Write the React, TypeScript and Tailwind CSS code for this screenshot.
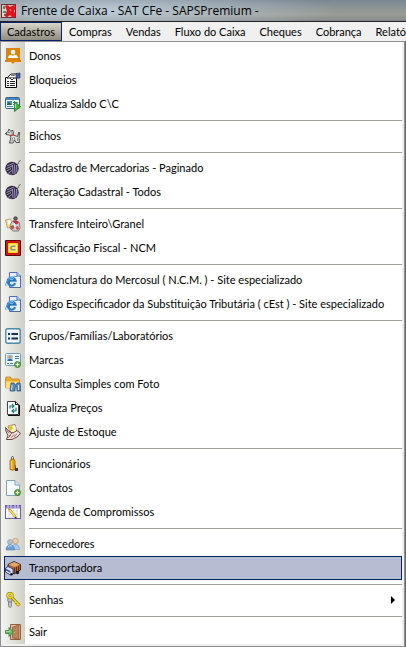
import type { ReactNode } from 'react';

interface MenuEntry {
  label:     string;
  icon:      ReactNode;
  active?:   boolean;
  submenu?:  boolean;
}

/* ---------- Icons (16x16) ---------- */

function Icon({ children }: { children: ReactNode }) {
  return (
    <svg viewBox="0 0 16 16" className="size-4 shrink-0" aria-hidden="true">
      {children}
    </svg>
  );
}

const AppIcon = () => (
  <Icon>
    <path d="M0 1h15v14H0z" fill="#6e2a2c" />
    <path d="M1 2h5v12H1z" fill="#d3dccb" />
    <path d="M2 3h2v3H2zM2 8h3v2H2zM3 11h2v2H3z" fill="#6b7f63" />
    <path d="M5 2h9v12H5z" fill="#efb9ba" />
    <path d="M4 3l2-1 3 2 4-2 2 2-2 4 2 5-3 2-3-3-4 3-1-3 2-4z" fill="#e3121c" />
    <path d="M9 6l1 2" stroke="#ff6d72" strokeWidth="1.200" />
  </Icon>
);

const OwnersIcon = () => (
  <Icon>
    <path d="M1 0h14v12h1v2h-6l-2 2-2-2H0v-2h1z" fill="#e08208" />
    <circle cx="8" cy="4" r="2.300" fill="#fff" />
    <path d="M3 10c0-2.500 2-3.500 5-3.500s5 1 5 3.500z" fill="#fff" />
    <path d="M6.500 6.500L8 8l1.500-1.500z" fill="#e08208" />
  </Icon>
);

const LockListIcon = () => (
  <Icon>
    <path d="M.5 5.500h11v10H.5z" fill="#fff" stroke="#000" />
    <path d="M2 9.500h2M5 9.500h5M2 11.500h2M5 11.500h5M2 13.500h2M5 13.500h5" stroke="#222" />
    <path d="M2 6l4-4h6v4H9L7 8 5 6z" fill="#fff" stroke="#000" strokeWidth=".9" />
    <path d="M5 5.500h4M6 3.500h4" stroke="#555" strokeWidth=".8" />
    <path d="M11 1.500l4-.5v5l-4 .5z" fill="#4a5a96" stroke="#1d2955" strokeWidth=".6" />
  </Icon>
);

const BalanceIcon = () => (
  <Icon>
    <rect x=".5" y="1.500" width="14" height="11" rx="1" fill="#eaf5fd" stroke="#2f6391" />
    <path d="M1 2h13v2H1z" fill="#4987bb" />
    <path d="M2 5h5v4H2z" fill="#5b96c4" />
    <path d="M2 8l2-2 3 3H2z" fill="#2d6545" />
    <path d="M2 10.500h6M8 6.500h5M8 8.500h2" stroke="#5b8cb0" />
    <path d="M9.500 5.500l6 5-6 5z" fill="#42b931" stroke="#16761a" strokeWidth=".8" />
    <path d="M10.500 8v4" stroke="#a5e58d" />
  </Icon>
);

const PetIcon = () => (
  <Icon>
    <path d="M4 1l1.500 2L8 2.500 8.500 7l4 1.500L14 4l.5 1-.5 5 .5 4.500H11L9.500 12 8 15H4.500L6 9 4.500 7 1 6.500 1 5l2-1.500z" fill="#dedede" stroke="#444" strokeWidth=".9" />
    <path d="M6 3.500L7.500 6M9 9l1 3M7.500 10L7 13.500M12.500 10v3" fill="none" stroke="#777" strokeWidth=".8" />
    <path d="M5 7.500l3.500-.5" stroke="#cf3232" strokeWidth="1.300" />
    <path d="M3.500 4.500h1M.500 5.500h1" stroke="#111" />
  </Icon>
);

const YarnIcon = () => (
  <Icon>
    <circle cx="7" cy="8.500" r="6.700" fill="#302a3c" />
    <path d="M2 6l7-3M1.500 8.500L7 6M1.500 11L6 8.500M3 13.500l4-3" stroke="#a394c6" strokeWidth="1" />
    <path d="M7.500 5l.500 9M9.500 4.500l.500 9.500M11.500 5l.500 7.500" stroke="#a394c6" strokeWidth="1" />
    <path d="M4 14l3 .500" stroke="#7c6f9a" strokeWidth=".8" />
    <path d="M12 5c2-1 1-4 3.500-4.500" fill="none" stroke="#56505e" />
  </Icon>
);

const TransferIcon = () => (
  <Icon>
    <path d="M.500 4l5-1 2 8-5 1z" fill="#f5e36a" stroke="#968b66" strokeWidth=".7" />
    <path d="M2.500 4.500l3-.5 1 4-3 .500z" fill="#fff" />
    <circle cx="10.500" cy="2.500" r="1.800" fill="#666" stroke="#222" strokeWidth=".6" />
    <path d="M8 5c-3 2-3 5-2.500 8l3 2h5l1.500-3-1-6z" fill="#d4d0d6" stroke="#665f66" strokeWidth=".8" />
    <path d="M8 4.500h4l1.500 2-1.500 2-3-1z" fill="#c92b38" />
    <path d="M5.500 10l3-1 1 3-3 2zM10.500 11l2.500-1 1 3-2 1z" fill="#bd5555" />
    <path d="M9 7l1 4" stroke="#fff" strokeWidth="1.300" />
  </Icon>
);

const FiscalIcon = () => (
  <Icon>
    <rect width="16" height="16" rx="1" fill="#5c0907" />
    <rect x="1" y="1" width="14" height="14" fill="#d61408" />
    <rect x="3" y="3" width="10" height="10" fill="#ffd21c" />
    <rect x="4" y="4" width="8" height="8" fill="#fff07a" />
    <path d="M10.500 6.200H7.500Q6 6.200 6 8t1.500 1.800h3" fill="none" stroke="#8a8a80" strokeWidth="1.600" />
  </Icon>
);

const SiteIcon = () => (
  <Icon>
    <path d="M4.500.500H12l3.500 3.500v11.500h-11z" fill="#e9effc" stroke="#5568b8" />
    <path d="M12 .500V4h3.500" fill="#c4d1f2" stroke="#5568b8" />
    <path d="M10.200 11.300A4 4 0 1 1 10.500 8.700H3.500" fill="none" stroke="#2479c4" strokeWidth="2.200" />
    <path d="M1 14C-1 11 6 3.500 12 4.500" fill="none" stroke="#4ba5e0" strokeWidth="1" />
    <path d="M3.500 7c1-2 4.500-2 5.500-.500" fill="none" stroke="#8bd3fa" strokeWidth=".8" />
  </Icon>
);

const GroupsIcon = () => (
  <Icon>
    <rect x=".8" y=".8" width="14.400" height="14.400" rx="1.500" fill="#e4f0f8" stroke="#5189ad" strokeWidth="1.400" />
    <path d="M2.500 2.500h11v11h-11z" fill="none" stroke="#fff" />
    <path d="M3 5h2v2H3zM6.500 5H13v2H6.500zM3 9.500h2v2H3zM6.500 9.500H13v2H6.500z" fill="#1c2f52" />
  </Icon>
);

const AddBadge = () => (
  <>
    <circle cx="12.500" cy="12.500" r="3" fill="#5fb53c" stroke="#2f8027" strokeWidth=".8" />
    <path d="M10.800 12.500h3.400M12.500 10.800v3.400" stroke="#fff" />
  </>
);

const BrandsIcon = () => (
  <Icon>
    <rect x=".5" y="1.500" width="15" height="12" rx="1" fill="#f3faff" stroke="#6b9abd" />
    <path d="M2 3h6v6H2z" fill="#a9d0ee" />
    <circle cx="5" cy="5" r="1.500" fill="#ca8c51" />
    <path d="M2.500 9c0-3 5-3 5 0z" fill="#2a6cac" />
    <path d="M10 4.500h4M10 6.500h4M2 11.500h2M5 11.500h3" stroke="#3d79ad" />
    <AddBadge />
  </Icon>
);

const PhotoSearchIcon = () => (
  <Icon>
    <path d="M.500 2q0-1 1-1h4l1 2h7q1 0 1 1v8h-13q-1 0-1-1z" fill="#eaad32" stroke="#c1811c" strokeWidth=".7" />
    <path d="M1 5.500h13V12H1z" fill="#ffdc78" />
    <path d="M6 7h3l1 2h1l1-2h3l1 8h-4v-4h-2v4H5z" fill="#5f8bc0" stroke="#234778" strokeWidth=".7" />
    <path d="M7 9l-.500 5M13.500 9v5" stroke="#d3e8f8" />
  </Icon>
);

const PriceUpdateIcon = () => (
  <Icon>
    <path d="M2.500 1.500h8l3 3v10h-11z" fill="#fff" stroke="#444" />
    <path d="M10.500 1.500v3h3M14.500 5v10.500H3" fill="none" stroke="#111" />
    <path d="M5 8.500V6h3.500M7 4l2 2-2 2M11 7.500V11H7.500M9 9l-2 2 2 2" fill="none" stroke="#168179" strokeWidth="1.200" />
  </Icon>
);

const StockIcon = () => (
  <Icon>
    <path d="M3 2l7-1.500 2 8L6 10z" fill="#fff3b0" stroke="#6b5540" strokeWidth=".7" />
    <path d="M3 2l3-1 2 3-3 3z" fill="#f2c13a" />
    <path d="M8 2l2-.500 1 3-2 1z" fill="#fff" />
    <path d="M.500 3.500l3.500 4 4 1.500 4-2.500 3.500 3-3.500 3.500-5 2.500H1.500l1.500-4-2-4z" fill="#f2e6e4" stroke="#5b302f" strokeWidth=".9" />
    <path d="M3 14l3-3M6 14l3-3.500M9 13l3-3.500M2 6.500l2 3M4 12l3-3" stroke="#8d5655" fill="none" strokeWidth=".9" />
  </Icon>
);

const StaffIcon = () => (
  <Icon>
    <path d="M6.500 3.500v-2q0-1 1-1t1 1v2" fill="none" stroke="#605d58" />
    <path d="M5 5q0-2 2.500-2T10 5v8.500q-2.500 1.500-5 0z" fill="#f0a20d" stroke="#8b5a10" strokeWidth=".7" />
    <path d="M6.500 5v8" stroke="#ffd86b" strokeWidth="1.300" />
    <path d="M10 8l1 4h2v3h-3z" fill="#3c3a36" />
  </Icon>
);

const ContactsIcon = () => (
  <Icon>
    <path d="M1.500.500H10L14.500 5v10.500h-13z" fill="#f7fbff" stroke="#82a2bd" />
    <path d="M10 .500V5h4.500" fill="#d5e7f6" stroke="#82a2bd" />
    <AddBadge />
  </Icon>
);

const AgendaIcon = () => (
  <Icon>
    <rect x=".5" y="1.500" width="15" height="13" fill="#fff" stroke="#6c60ab" />
    <path d="M1 2h14v2.500H1z" fill="#8a7fc3" />
    <path d="M3 1v3M6 1v3M10 1v3M13 1v3" stroke="#dcd8f0" />
    <path d="M3 7h10M3 10h10M3 13h10M4 6v8M8 6v8M12 6v8" stroke="#dedbed" />
    <path d="M4 5l7 8.500" stroke="#a58a24" strokeWidth="2.400" />
    <path d="M4 5l7 8.500" stroke="#f7df4e" strokeWidth="1.500" />
    <path d="M3 4l2 1-1 1z" fill="#cb3e46" />
    <path d="M10.500 12.500l2 2.500-3-1z" fill="#333" />
  </Icon>
);

const SuppliersIcon = () => (
  <Icon>
    <circle cx="10.500" cy="5" r="2.800" fill="#e9cda6" stroke="#a8906f" strokeWidth=".6" />
    <path d="M6.500 13.500c0-7 8-7 8 0z" fill="#a9cbe6" stroke="#6f97b8" strokeWidth=".6" />
    <circle cx="5" cy="6" r="2.500" fill="#b5bfc8" stroke="#8595a2" strokeWidth=".6" />
    <path d="M1 14c0-7 8.500-7 8.500 0z" fill="#6a9fd2" stroke="#4f82b0" strokeWidth=".6" />
    <path d="M3 11q1-2 4-1" fill="none" stroke="#bddcf2" />
  </Icon>
);

const TruckIcon = () => (
  <Icon>
    <path d="M3 4.500l6-3 6.500 3v5.500L9 14 3 10z" fill="#b06a33" stroke="#30190d" strokeWidth=".9" />
    <path d="M3.500 4.500L9.500 7l5.500-2.500L9 2z" fill="#dfa873" />
    <path d="M9.500 7.500V13M11.500 7v5M13.500 6v5" stroke="#5e3116" />
    <path d="M.500 8L3 6.500l5 2.500v5l-2.500 1-5-3z" fill="#dfe6fb" stroke="#263777" strokeWidth=".9" />
    <path d="M1 8.500L5.500 11v2L1 10.500z" fill="#415aa9" />
    <circle cx="12.500" cy="12.500" r="1.700" fill="#151515" />
    <circle cx="6.500" cy="14.300" r="1.300" fill="#151515" />
  </Icon>
);

const KeysIcon = () => (
  <Icon>
    <circle cx="5" cy="8" r="2.300" fill="#c7c7c7" stroke="#777" />
    <path d="M3.500 10h3v4l-1 1.500-2-1z" fill="#c4c4c4" stroke="#777" strokeWidth=".8" />
    <circle cx="5" cy="3.500" r="2.300" fill="none" stroke="#867709" strokeWidth="2.800" />
    <circle cx="5" cy="3.500" r="2.300" fill="none" stroke="#f2df29" strokeWidth="1.600" />
    <path d="M7 5.500l7.500 8M11 9.500l-1.500 1.500M13 12l-1.500 1.500" stroke="#867709" strokeWidth="2.800" />
    <path d="M7 5.500l7.500 8M11 9.500l-1.500 1.500M13 12l-1.500 1.500" stroke="#f2df29" strokeWidth="1.500" />
  </Icon>
);

const ExitIcon = () => (
  <Icon>
    <path d="M5.500.500h10v15h-10z" fill="#e3c4a6" stroke="#8a6244" />
    <path d="M7.500 3L14 1v14.500L7.500 14z" fill="#b98257" stroke="#7c4c2b" strokeWidth=".6" />
    <path d="M8.500 8.500h1" stroke="#f5dfa0" />
    <path d="M.500 6.500H4v-3L8.500 8 4 12.500v-3H.500z" fill="#69bc65" stroke="#287c36" strokeWidth=".8" />
    <path d="M1 7.500h4V6" fill="none" stroke="#b5e5a8" strokeWidth=".8" />
  </Icon>
);

/* ---------- Data ---------- */

const topMenus = ['Cadastros', 'Compras', 'Vendas', 'Fluxo do Caixa', 'Cheques', 'Cobrança', 'Relatórios'];

const groups: MenuEntry[][] = [
  [
    { label: 'Donos', icon: <OwnersIcon /> },
    { label: 'Bloqueios', icon: <LockListIcon /> },
    { label: 'Atualiza Saldo C\\C', icon: <BalanceIcon /> },
  ],
  [{ label: 'Bichos', icon: <PetIcon /> }],
  [
    { label: 'Cadastro de Mercadorias - Paginado', icon: <YarnIcon /> },
    { label: 'Alteração Cadastral - Todos', icon: <YarnIcon /> },
  ],
  [
    { label: 'Transfere Inteiro\\Granel', icon: <TransferIcon /> },
    { label: 'Classificação Fiscal - NCM', icon: <FiscalIcon /> },
  ],
  [
    { label: 'Nomenclatura do Mercosul ( N.C.M. ) - Site especializado', icon: <SiteIcon /> },
    { label: 'Código Especificador da Substituição Tributária ( cEst ) - Site especializado', icon: <SiteIcon /> },
  ],
  [
    { label: 'Grupos/Famílias/Laboratórios', icon: <GroupsIcon /> },
    { label: 'Marcas', icon: <BrandsIcon /> },
    { label: 'Consulta Simples com Foto', icon: <PhotoSearchIcon /> },
    { label: 'Atualiza Preços', icon: <PriceUpdateIcon /> },
    { label: 'Ajuste de Estoque', icon: <StockIcon /> },
  ],
  [
    { label: 'Funcionários', icon: <StaffIcon /> },
    { label: 'Contatos', icon: <ContactsIcon /> },
    { label: 'Agenda de Compromissos', icon: <AgendaIcon /> },
  ],
  [
    { label: 'Fornecedores', icon: <SuppliersIcon /> },
    { label: 'Transportadora', icon: <TruckIcon />, active: true },
  ],
  [{ label: 'Senhas', icon: <KeysIcon />, submenu: true }],
  [{ label: 'Sair', icon: <ExitIcon /> }],
];

/* ---------- Layout ---------- */

function MenuRow({ label, icon, active, submenu }: MenuEntry) {
  return (
    <li>
      <button
        type="button"
        className={`flex h-6 w-full items-center gap-2 border text-left whitespace-nowrap ${
          active ? 'border-[#0a246a] bg-[#b6bdd2]' : 'border-transparent'
        }`}
      >
        {icon}
        <span className="flex-1">{label}</span>
        {submenu && (
          <svg viewBox="0 0 4 8" className="mr-1.5 h-2 w-1 shrink-0" aria-hidden="true">
            <path d="M0 0l4 4-4 4z" fill="#000" />
          </svg>
        )}
      </button>
    </li>
  );
}

export default function App() {
  return (
    <div className="overflow-hidden bg-[#f0f0f0] font-[Lato,'Liberation_Sans',sans-serif] text-[11px] leading-4 text-black">

      {/* Title bar */}
      <header className="flex h-[21px] items-center gap-1 bg-[radial-gradient(ellipse_240px_24px_at_100px_11px,#bccbd8,transparent),linear-gradient(to_bottom,#7b8794,#9b9e95_70%,#85888a)] px-px">
        <AppIcon />
        <h1 className="font-['Open_Sans',sans-serif] text-xs whitespace-nowrap">
          Frente de Caixa - SAT CFe - SAPSPremium -
        </h1>
      </header>

      {/* Menu bar */}
      <nav className="flex h-5 overflow-hidden border-t border-[#222] bg-[#f0f0f0]">
        {topMenus.map((name, i) => (
          <button
            key={name}
            type="button"
            className={`shrink-0 border px-1.5 whitespace-nowrap ${
              i === 0
                ? 'border-[#0a246a] bg-linear-to-b from-[#d8d5cb] to-[#8f8c80]'
                : 'border-transparent'
            }`}
          >
            {name}
          </button>
        ))}
      </nav>

      {/* Open drop-down */}
      <div className="bg-[#6b6b6b] pr-px">
        <div className="border border-[#8f8f8f] bg-[#f0f0f0] pr-0.5 pb-0.5">
          <div className="bg-[linear-gradient(to_right,#f4f4f2_0px,#d0d0c6_24px,#fff_24px)] pt-0.5 pl-[3px]">
            {groups.map((group, i) => (
              <ul key={i}>
                {i > 0 && (
                  <li role="separator" className="ml-[25px] flex h-2 items-center">
                    <span className="h-px w-full bg-[#a0a09a]" />
                  </li>
                )}
                {group.map(entry => (
                  <MenuRow key={entry.label} {...entry} />
                ))}
              </ul>
            ))}
          </div>
        </div>
      </div>
    </div>
  );
}
